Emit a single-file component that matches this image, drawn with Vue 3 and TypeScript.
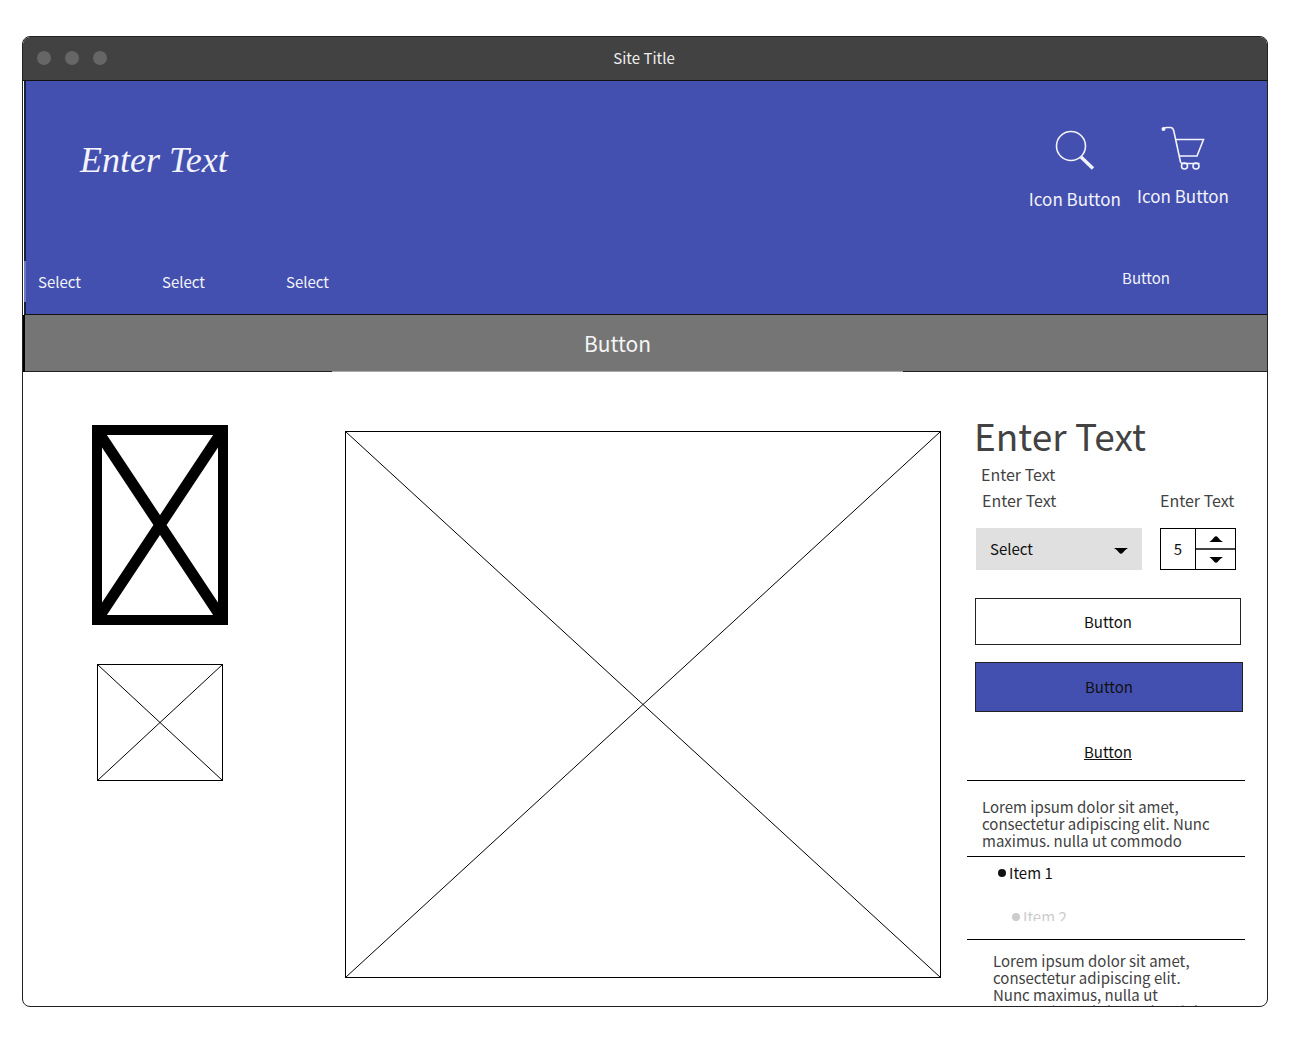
<script setup lang="ts">
import { ref } from 'vue'

const menus = ['Select', 'Select', 'Select']
const quantity = ref(5)
</script>

<template>
  <div class="page">
    <div class="window">
      <header class="titlebar">
        <span class="dots"><i></i><i></i><i></i></span>
        <h1>Site Title</h1>
      </header>

      <div class="banner">
        <div class="brand-row">
          <a class="logo" href="#">Enter Text</a>
          <div class="actions">
            <button type="button" class="icon-button">
              <svg width="40" height="40" viewBox="0 0 40 40" fill="none" stroke="currentColor">
                <circle cx="16" cy="16" r="14.5" stroke-width="1.6" />
                <path d="M26 27 38 38.500" stroke-width="3.4" />
              </svg>
              <span>Icon Button</span>
            </button>
            <button type="button" class="icon-button cart">
              <svg width="44" height="44" viewBox="0 0 44 44" fill="none" stroke="currentColor" stroke-width="1.6">
                <circle cx="2.500" cy="3" r="1.200" fill="currentColor" />
                <path d="M2.500 2.500Q4 1.500 6 1.500H9.500Q12 1.500 12.800 5L19.500 36Q20 37.500 22 37.500H38.500M14.500 13.500H42.500L36 30H18.500" />
                <circle cx="23.500" cy="40" r="3" />
                <circle cx="35" cy="40" r="3" />
              </svg>
              <span>Icon Button</span>
            </button>
          </div>
        </div>
        <nav class="nav">
          <button v-for="(menu, i) in menus" :key="i" type="button" class="menu">{{ menu }}</button>
          <button type="button" class="account">Button</button>
        </nav>
        <div class="banner-foot"></div>
      </div>

      <div class="promo">
        <button type="button">Button</button>
      </div>

      <main class="content">
        <div class="thumbs">
          <svg class="thumb-active" viewBox="0 0 136 200" fill="none" stroke="#000">
            <rect x="5" y="5" width="126" height="190" stroke-width="10" />
            <path d="M5 5 131 195M131 5 5 195" stroke-width="11" />
          </svg>
          <svg class="thumb" viewBox="0 0 126 117" fill="none" stroke="#000">
            <rect x="0.500" y="0.500" width="125" height="116" />
            <path d="M0.500 0.500 125.500 116.500M125.500 0.500 0.500 116.500" />
          </svg>
        </div>

        <svg class="hero" viewBox="0 0 596 547" fill="none" stroke="#000">
          <rect x="0.500" y="0.500" width="595" height="546" />
          <path d="M0.500 0.500 595.500 546.500M595.500 0.500 0.500 546.500" />
        </svg>

        <section class="details">
          <h2>Enter Text</h2>
          <p class="price">Enter Text</p>
          <div class="fields">
            <div class="field">
              <label for="option">Enter Text</label>
              <div class="select-box">
                <select id="option"><option>Select</option></select>
                <svg width="14" height="6" viewBox="0 0 14 6"><path d="M0 0H14Q11 1.500 9 4.500Q7 7 5 4.500Q3 1.500 0 0Z" /></svg>
              </div>
            </div>
            <div class="field quantity">
              <label for="quantity">Enter Text</label>
              <div class="stepper">
                <input id="quantity" v-model="quantity" type="text" />
                <div class="steps">
                  <button type="button" aria-label="Increase" @click="quantity++">
                    <svg width="14" height="6" viewBox="0 0 14 6"><path d="M0 6Q3 4.500 5 1.500Q7 -1 9 1.500Q11 4.500 14 6Z" /></svg>
                  </button>
                  <button type="button" aria-label="Decrease" @click="quantity--">
                    <svg width="14" height="6" viewBox="0 0 14 6"><path d="M0 0H14Q11 1.500 9 4.500Q7 7 5 4.500Q3 1.500 0 0Z" /></svg>
                  </button>
                </div>
              </div>
            </div>
          </div>
          <button type="button" class="outline">Button</button>
          <button type="button" class="primary">Button</button>
          <a class="more" href="#">Button</a>
          <p class="summary">Lorem ipsum dolor sit amet,<br />consectetur adipiscing elit. Nunc<br />maximus. nulla ut commodo</p>
          <ul class="items">
            <li>Item 1</li>
            <li class="faded">Item 2</li>
          </ul>
          <p class="note">Lorem ipsum dolor sit amet,<br />consectetur adipiscing elit.<br />Nunc maximus, nulla ut<br />commodo sagittis, sapien dui</p>
        </section>
      </main>
    </div>
  </div>
</template>

<style>
body {
  background: #fff;
}
</style>

<style scoped>
* {
  box-sizing: border-box;
}

.page {
  padding: 36px 40px 36px 22px;
  font-family: "Noto Sans CJK SC", "Noto Sans", sans-serif;
  font-size: 15px;
  line-height: 20px;
  color: #111;
}

h1, h2, p, ul {
  margin: 0;
  padding: 0;
  font-weight: 400;
}

button, input, select {
  margin: 0;
  padding: 0;
  border: 0;
  border-radius: 0;
  background: none;
  font: inherit;
  color: inherit;
}

svg {
  display: block;
}

.window {
  border: 1px solid #222;
  border-radius: 8px;
  overflow: hidden;
}

.titlebar {
  display: grid;
  grid-template-columns: 1fr auto 1fr;
  align-items: center;
  height: 44px;
  padding: 0 16px 2px 14px;
  border-bottom: 1px solid #111;
  background: #424242;
  color: #eee;
}

.titlebar h1 {
  font-size: 15px;
}

.dots {
  display: flex;
  gap: 14px;
}

.dots i {
  width: 14px;
  height: 14px;
  border-radius: 50%;
  background: #666;
}

.banner {
  margin-left: 1px;
  border-bottom: 1px solid #111;
  background: #4350af;
  color: #f2f3fb;
}

.brand-row {
  display: flex;
  justify-content: space-between;
  height: 180px;
  padding: 45px 38px 0 54px;
  border-left: 2px solid #1b1f3c;
}

.logo {
  padding-top: 14px;
  font-family: "Liberation Serif", serif;
  font-size: 36px;
  font-style: italic;
  line-height: 40px;
  color: inherit;
  text-decoration: none;
}

.actions {
  display: flex;
  gap: 16px;
}

.icon-button {
  display: flex;
  flex-direction: column;
  align-items: center;
  gap: 19px;
  height: 86px;
  padding-top: 4px;
  font-size: 17px;
}

.icon-button.cart {
  gap: 16px;
  padding-top: 0;
}

.nav {
  display: flex;
  align-items: center;
  height: 41px;
  padding: 0 97px 0 12px;
  border-left: 2px solid #6f79c2;
}

.menu {
  width: 124px;
  text-align: left;
}

.account {
  margin-left: auto;
  padding-bottom: 8px;
}

.banner-foot {
  height: 12px;
  border-left: 2px solid #1b1f3c;
}

.promo {
  display: grid;
  grid-template-columns: 307fr 572fr 364fr;
  height: 57px;
  border-left: 2px solid #000;
  background: #757575;
}

.promo::before,
.promo::after {
  border-bottom: 1px solid #222;
  content: "";
}

.promo button {
  border-bottom: 1px solid #aaa;
  font-size: 21px;
  color: #f5f5f5;
}

.content {
  display: grid;
  grid-template-columns: 136px 1fr 278px;
  align-items: start;
  padding-left: 69px;
  padding-right: 22px;
}

.thumbs {
  display: flex;
  flex-direction: column;
  align-items: center;
  gap: 39px;
  padding-top: 53px;
}

.thumb-active {
  width: 136px;
  height: 200px;
}

.thumb {
  width: 126px;
  height: 117px;
}

.hero {
  width: calc(100% - 143px);
  margin: 59px 26px 0 117px;
}

.details {
  padding-top: 42px;
}

h2 {
  padding-left: 7px;
  font-size: 37px;
  line-height: 42px;
  color: #424242;
}

.price {
  padding: 8px 0 0 14px;
  font-size: 16px;
  color: #424242;
}

.fields {
  display: flex;
  justify-content: space-between;
  padding: 6px 9px 0 9px;
  font-size: 16px;
}

.field label {
  display: block;
  margin-bottom: 18px;
  padding-left: 6px;
  color: #424242;
}

.quantity label {
  padding-left: 0;
}

.select-box {
  display: grid;
  align-items: center;
  width: 166px;
  height: 42px;
  background: #e0e0e0;
  font-size: 15px;
}

.select-box > * {
  grid-area: 1 / 1;
}

.select-box select {
  width: 100%;
  height: 42px;
  padding-left: 14px;
  appearance: none;
}

.select-box svg {
  justify-self: end;
  margin: 4px 14px 0 0;
  pointer-events: none;
}

.stepper {
  display: flex;
  width: 76px;
  height: 42px;
  border: 1px solid #000;
  font-size: 15px;
}

.stepper input {
  width: 34px;
  text-align: center;
}

.steps {
  display: grid;
  flex: 1;
  border-left: 1px solid #000;
}

.steps button {
  display: grid;
  place-items: center;
}

.steps button + button {
  border-top: 2px solid #444;
}

.outline,
.primary {
  display: block;
  width: 266px;
  height: 47px;
  margin: 28px 0 0 8px;
  border: 1px solid #222;
}

.primary {
  width: 268px;
  height: 50px;
  margin-top: 17px;
  background: #4350af;
}

.more {
  display: block;
  padding: 30px 0 18px 4px;
  border-bottom: 1px solid #000;
  text-align: center;
  color: inherit;
}

.summary,
.note {
  line-height: 17px;
  color: #424242;
}

.summary {
  padding: 17px 0 7px 15px;
  border-bottom: 1px solid #000;
}

.items {
  height: 83px;
  padding: 6px 0 0 31px;
  border-bottom: 1px solid #000;
  list-style: none;
}

.items li {
  display: flex;
  align-items: center;
  gap: 3px;
}

.items li::before {
  width: 8px;
  height: 8px;
  border-radius: 50%;
  background: currentColor;
  content: "";
}

.items .faded {
  align-items: flex-start;
  height: 14px;
  margin: 24px 0 0 14px;
  overflow: hidden;
  color: #ccc;
}

.items .faded::before {
  margin-top: 6px;
}

.note {
  height: 66px;
  padding: 12px 0 0 26px;
  overflow: hidden;
}
</style>
